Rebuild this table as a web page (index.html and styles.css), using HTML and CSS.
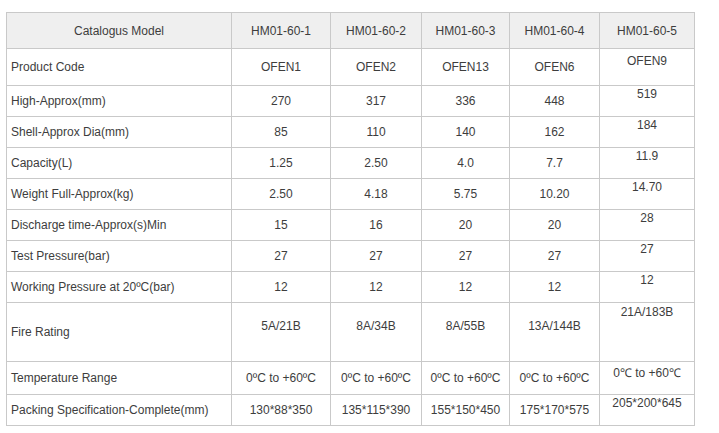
FILE: index.html
```html
<!DOCTYPE html>
<html>
<head>
<meta charset="utf-8">
<link rel="stylesheet" href="styles.css">
</head>
<body>
<div class="spec" role="table">
  <div class="cell head">Catalogus Model</div>
  <div class="cell head">HM01-60-1</div>
  <div class="cell head">HM01-60-2</div>
  <div class="cell head">HM01-60-3</div>
  <div class="cell head">HM01-60-4</div>
  <div class="cell head">HM01-60-5</div>

  <div class="cell label">Product Code</div>
  <div class="cell">OFEN1</div><div class="cell">OFEN2</div><div class="cell">OFEN13</div><div class="cell">OFEN6</div>
  <div class="cell last p4">OFEN9</div>

  <div class="cell label">High-Approx(mm)</div>
  <div class="cell">270</div><div class="cell">317</div><div class="cell">336</div><div class="cell">448</div>
  <div class="cell last">519</div>

  <div class="cell label">Shell-Approx Dia(mm)</div>
  <div class="cell">85</div><div class="cell">110</div><div class="cell">140</div><div class="cell">162</div>
  <div class="cell last">184</div>

  <div class="cell label">Capacity(L)</div>
  <div class="cell">1.25</div><div class="cell">2.50</div><div class="cell">4.0</div><div class="cell">7.7</div>
  <div class="cell last">11.9</div>

  <div class="cell label">Weight Full-Approx(kg)</div>
  <div class="cell">2.50</div><div class="cell">4.18</div><div class="cell">5.75</div><div class="cell">10.20</div>
  <div class="cell last">14.70</div>

  <div class="cell label">Discharge time-Approx(s)Min</div>
  <div class="cell">15</div><div class="cell">16</div><div class="cell">20</div><div class="cell">20</div>
  <div class="cell last">28</div>

  <div class="cell label">Test Pressure(bar)</div>
  <div class="cell">27</div><div class="cell">27</div><div class="cell">27</div><div class="cell">27</div>
  <div class="cell last">27</div>

  <div class="cell label">Working Pressure at 20ºC(bar)</div>
  <div class="cell">12</div><div class="cell">12</div><div class="cell">12</div><div class="cell">12</div>
  <div class="cell last">12</div>

  <div class="cell label">Fire Rating</div>
  <div class="cell upper">5A/21B</div><div class="cell upper">8A/34B</div><div class="cell upper">8A/55B</div><div class="cell upper">13A/144B</div>
  <div class="cell last p1">21A/183B</div>

  <div class="cell label">Temperature Range</div>
  <div class="cell">0ºC to +60ºC</div><div class="cell">0ºC to +60ºC</div><div class="cell">0ºC to +60ºC</div><div class="cell">0ºC to +60ºC</div>
  <div class="cell last p3">0℃ to +60℃</div>

  <div class="cell label">Packing Specification-Complete(mm)</div>
  <div class="cell">130*88*350</div><div class="cell">135*115*390</div><div class="cell">155*150*450</div><div class="cell">175*170*575</div>
  <div class="cell last">205*200*645</div>
</div>
</body>
</html>
```

FILE: styles.css
```css
html, body {
  margin: 0;
  padding: 0;
  background: #ffffff;
}
body {
  padding: 12px 0 0 6px;
  font-family: "Liberation Sans", Arial, sans-serif;
  font-size: 12px;
  color: #3d3d3d;
}
.spec {
  display: grid;
  width: 689px;
  box-sizing: border-box;
  padding: 1px;
  gap: 1px;
  background: #c9c9c9;
  grid-template-columns: 224px 98px 90px 87px 89px 94px;
  grid-template-rows: 35px 36px 30px 30px 30px 30px 30px 30px 30px 58px 32px 30px;
}
.cell {
  background: #ffffff;
  display: flex;
  align-items: center;
  justify-content: center;
  text-align: center;
  padding: 0 4px;
  line-height: 16px;
  white-space: nowrap;
}
.cell.head {
  background: #efefef;
}
.cell.label {
  justify-content: flex-start;
  text-align: left;
}
.cell.last {
  align-items: flex-start;
  line-height: 14px;
  padding-top: 1px;
}
.cell.last.p1 { padding-top: 2px; }
.cell.last.p3 { padding-top: 4px; }
.cell.last.p4 { padding-top: 5px; }
.cell.upper {
  padding-bottom: 13px;
}
```
